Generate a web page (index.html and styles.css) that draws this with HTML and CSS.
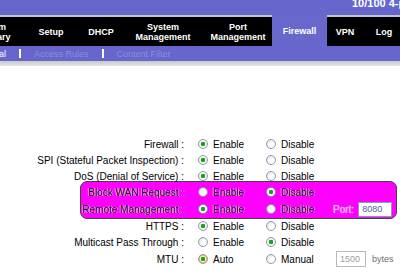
FILE: index.html
```html
<!DOCTYPE html>
<html lang="en">
<head>
    <meta charset="UTF-8">
    <title>Firewall - General</title>
    <link rel="stylesheet" href="styles.css">
</head>
<body>
    <div class="top">
        <div class="model">10/100 4-port VPN Router</div>
        <div class="tabs">
            <div class="tab tab-summary">System<br>Summary</div>
            <div class="tab tab-setup">Setup</div>
            <div class="tab tab-dhcp">DHCP</div>
            <div class="tab tab-system">System<br>Management</div>
            <div class="tab tab-port">Port<br>Management</div>
            <div class="tab tab-firewall active">Firewall</div>
            <div class="tab tab-vpn">VPN</div>
            <div class="tab tab-log">Log</div>
        </div>
        <div class="subtabs">
            <span class="current">General</span>
            <span class="sep"></span>
            <span>Access Rules</span>
            <span class="sep"></span>
            <span>Content Filter</span>
        </div>
    </div>
    <div class="shade"></div>

    <div class="form">
        <div class="row">
            <div class="label">Firewall :</div>
            <div class="opt"><span class="radio checked"></span>Enable</div>
            <div class="opt"><span class="radio"></span>Disable</div>
        </div>
        <div class="row">
            <div class="label">SPI (Stateful Packet Inspection) :</div>
            <div class="opt"><span class="radio checked"></span>Enable</div>
            <div class="opt"><span class="radio"></span>Disable</div>
        </div>
        <div class="row">
            <div class="label">DoS (Denial of Service) :</div>
            <div class="opt"><span class="radio checked"></span>Enable</div>
            <div class="opt"><span class="radio"></span>Disable</div>
        </div>

        <div class="highlight">
            <div class="row">
                <div class="label">Block WAN Request :</div>
                <div class="opt"><span class="radio"></span>Enable</div>
                <div class="opt"><span class="radio checked"></span>Disable</div>
            </div>
            <div class="row row-tall">
                <div class="label">Remote Management :</div>
                <div class="opt"><span class="radio checked"></span>Enable</div>
                <div class="opt"><span class="radio"></span>Disable</div>
                <div class="extra">
                    <span class="port-label">Port:</span>
                    <span class="input port-input">8080</span>
                </div>
            </div>
        </div>

        <div class="row">
            <div class="label">HTTPS :</div>
            <div class="opt"><span class="radio checked"></span>Enable</div>
            <div class="opt"><span class="radio"></span>Disable</div>
        </div>
        <div class="row">
            <div class="label">Multicast Pass Through :</div>
            <div class="opt"><span class="radio"></span>Enable</div>
            <div class="opt"><span class="radio checked"></span>Disable</div>
        </div>
        <div class="row row-tall">
            <div class="label">MTU :</div>
            <div class="opt"><span class="radio checked hover"></span>Auto</div>
            <div class="opt"><span class="radio"></span>Manual</div>
            <div class="extra">
                <span class="input mtu-input">1500</span>
                <span class="unit">bytes</span>
            </div>
        </div>
    </div>
</body>
</html>
```

FILE: styles.css
```css
body {
    margin: 0;
    width: 400px;
    height: 275px;
    overflow: hidden;
    background: #fff;
    font-family: "Liberation Sans", Arial, sans-serif;
    color: #000;
}
.top {
    background-color: #6666cc;
}
.model {
    height: 15px;
    padding-left: 352px;
    color: #fff;
    font-size: 11px;
    font-weight: bold;
    line-height: 6px;
    white-space: nowrap;
    overflow: hidden;
}
.tabs {
    display: flex;
    height: 29px;
    margin-left: -42px;
    background-color: #000;
    border-top: 2px solid #c4c4d4;
}
.tab {
    flex: none;
    display: flex;
    align-items: center;
    justify-content: center;
    text-align: center;
    color: #fff;
    font-size: 9px;
    font-weight: bold;
    line-height: 10px;
}
.tab.active {
    margin-top: -2px;
    height: 31px;
    background-color: #6868cc;
}
.tab-summary { width: 64px; }
.tab-setup { width: 58px; }
.tab-dhcp { width: 42px; }
.tab-system { width: 82px; }
.tab-port { width: 68px; }
.tab-firewall { width: 55px; }
.tab-vpn { width: 36px; }
.tab-log { width: 42px; }
.subtabs {
    display: flex;
    align-items: center;
    gap: 13px;
    height: 15px;
    margin-left: -26px;
    font-size: 9px;
    color: #8e8ed4;
    white-space: nowrap;
}
.subtabs .current {
    color: #fff;
}
.sep {
    width: 2px;
    height: 9px;
    background-color: #fff;
}
.shade {
    height: 5px;
    background: linear-gradient(#c8c8c8, #e6e6e6);
}
.form {
    padding-top: 70px;
    font-size: 10px;
}
.row {
    display: grid;
    grid-template-columns: 198px 68px 67px auto;
    align-items: center;
    height: 16px;
    white-space: nowrap;
}
.row-tall {
    height: 18px;
}
.label {
    text-align: right;
    padding-right: 14px;
}
.opt {
    display: flex;
    align-items: center;
    gap: 5px;
}
.radio {
    flex: none;
    box-sizing: border-box;
    width: 10px;
    height: 10px;
    border: 1px solid #8e9aab;
    border-radius: 50%;
    background: radial-gradient(circle at 65% 65%, #fff 30%, #d8d8de);
}
.radio.checked {
    background: radial-gradient(circle, #21a121 0 2px, #fff 2.6px 45%, #d8d8de);
}
.radio.hover {
    background: radial-gradient(circle, #21a121 0 2px, #fff 2.6px 40%, #f8c040 60%, #e8a020);
}
.highlight {
    margin: -3px 3px -1px 80px;
    padding-top: 2px;
    background-color: #ff00ff;
    border: 1px solid #444;
    border-radius: 7px;
}
.highlight .row {
    margin-left: -81px;
}
.highlight .label,
.highlight .opt {
    color: #200020;
    text-shadow: 1px 0 0 rgba(255, 255, 255, 0.6), -1px 0 0 rgba(255, 255, 255, 0.6);
}
.extra {
    display: flex;
    align-items: center;
}
.port-label {
    color: #f8b0f8;
    margin-right: 4px;
    text-shadow: 0 0 1px #fff;
}
.input {
    box-sizing: border-box;
    background: #fff;
    border: 1px solid #7f9db9;
    padding-left: 3px;
    font-size: 9px;
}
.port-input {
    width: 34px;
    height: 15px;
    line-height: 13px;
    color: #5060a8;
}
.mtu-input {
    width: 30px;
    height: 16px;
    margin-left: 3px;
    line-height: 14px;
    color: #a0a0a0;
    border-color: #b8b8b8;
}
.unit {
    margin-left: 6px;
    color: #707070;
    font-size: 9px;
}
```
